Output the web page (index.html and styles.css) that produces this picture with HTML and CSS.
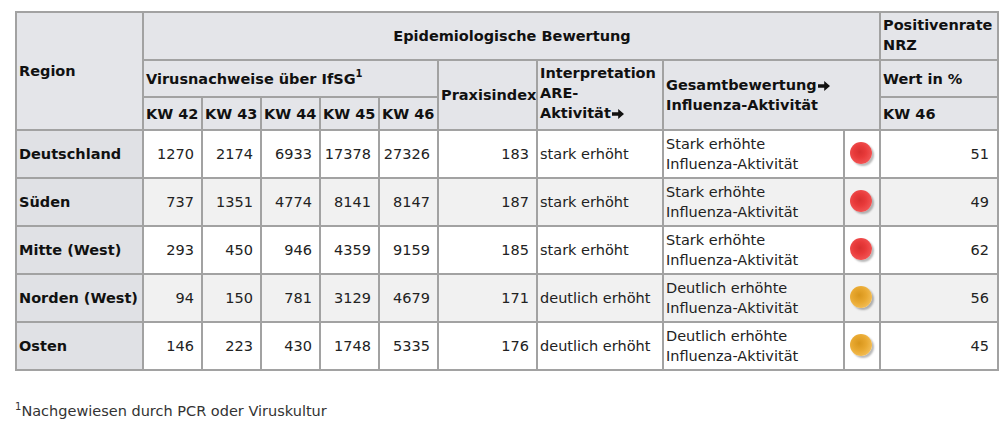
FILE: index.html
```html
<!DOCTYPE html>
<html lang="de">
<head>
<meta charset="utf-8">
<title>Influenza</title>
<link rel="stylesheet" href="styles.css">
</head>
<body>
<div class="page">
<table class="grid">
  <colgroup>
    <col class="c-region">
    <col class="c-kw"><col class="c-kw"><col class="c-kw"><col class="c-kw"><col class="c-kw">
    <col class="c-praxis">
    <col class="c-interp">
    <col class="c-gesamt">
    <col class="c-dot">
    <col class="c-pos">
  </colgroup>
  <thead>
    <tr class="h1">
      <th rowspan="3" class="left">Region</th>
      <th colspan="9" class="center">Epidemiologische Bewertung</th>
      <th class="left top">Positivenrate NRZ</th>
    </tr>
    <tr class="h2">
      <th colspan="5" class="left">Virusnachweise über IfSG<sup>1</sup></th>
      <th rowspan="2" class="left">Praxisindex</th>
      <th rowspan="2" class="left top">Interpretation ARE-<span class="nobr">Aktivität<svg class="arrow" viewBox="0 0 12 10" width="12" height="10"><path d="M0 3.3h6.2V0L12 5l-5.8 5V6.7H0z"/></svg></span></th>
      <th rowspan="2" colspan="2" class="left">Gesamtbewertung<svg class="arrow" viewBox="0 0 12 10" width="12" height="10"><path d="M0 3.3h6.2V0L12 5l-5.8 5V6.7H0z"/></svg><br>Influenza-Aktivität</th>
      <th class="left">Wert in %</th>
    </tr>
    <tr class="h3">
      <th class="left">KW 42</th>
      <th class="left">KW 43</th>
      <th class="left">KW 44</th>
      <th class="left">KW 45</th>
      <th class="left">KW 46</th>
      <th class="left">KW 46</th>
    </tr>
  </thead>
  <tbody>
    <tr class="odd">
      <th class="region">Deutschland</th>
      <td class="num">1270</td><td class="num">2174</td><td class="num">6933</td><td class="num">17378</td><td class="num">27326</td>
      <td class="num">183</td>
      <td class="txt">stark erhöht</td>
      <td class="txt two">Stark erhöhte<br>Influenza-Aktivität</td>
      <td class="dotcell"><span class="dot red"></span></td>
      <td class="num pos">51</td>
    </tr>
    <tr class="even">
      <th class="region">Süden</th>
      <td class="num">737</td><td class="num">1351</td><td class="num">4774</td><td class="num">8141</td><td class="num">8147</td>
      <td class="num">187</td>
      <td class="txt">stark erhöht</td>
      <td class="txt two">Stark erhöhte<br>Influenza-Aktivität</td>
      <td class="dotcell"><span class="dot red"></span></td>
      <td class="num pos">49</td>
    </tr>
    <tr class="odd">
      <th class="region">Mitte (West)</th>
      <td class="num">293</td><td class="num">450</td><td class="num">946</td><td class="num">4359</td><td class="num">9159</td>
      <td class="num">185</td>
      <td class="txt">stark erhöht</td>
      <td class="txt two">Stark erhöhte<br>Influenza-Aktivität</td>
      <td class="dotcell"><span class="dot red"></span></td>
      <td class="num pos">62</td>
    </tr>
    <tr class="even">
      <th class="region">Norden (West)</th>
      <td class="num">94</td><td class="num">150</td><td class="num">781</td><td class="num">3129</td><td class="num">4679</td>
      <td class="num">171</td>
      <td class="txt">deutlich erhöht</td>
      <td class="txt two">Deutlich erhöhte<br>Influenza-Aktivität</td>
      <td class="dotcell"><span class="dot orange"></span></td>
      <td class="num pos">56</td>
    </tr>
    <tr class="odd">
      <th class="region">Osten</th>
      <td class="num">146</td><td class="num">223</td><td class="num">430</td><td class="num">1748</td><td class="num">5335</td>
      <td class="num">176</td>
      <td class="txt">deutlich erhöht</td>
      <td class="txt two">Deutlich erhöhte<br>Influenza-Aktivität</td>
      <td class="dotcell"><span class="dot orange"></span></td>
      <td class="num pos">45</td>
    </tr>
  </tbody>
</table>
<p class="note"><sup>1</sup>Nachgewiesen durch PCR oder Viruskultur</p>
</div>
</body>
</html>
```

FILE: styles.css
```css
html, body {
  margin: 0;
  padding: 0;
  background: #ffffff;
}
.page {
  padding: 11px 0 0 15px;
  font-family: "DejaVu Sans", Verdana, sans-serif;
  font-size: 14.5px;
  color: #222;
}
.grid {
  border-collapse: collapse;
  table-layout: fixed;
  width: 982px;
  border: 2px solid #8a8a8a;
}
.c-region { width: 127px; }
.c-kw { width: 59px; }
.c-praxis { width: 99px; }
.c-interp { width: 126px; }
.c-gesamt { width: 181px; }
.c-dot { width: 36px; }
.c-pos { width: 118px; }

.grid th, .grid td {
  border: 2px solid #a2a2a2;
  padding: 0 1px 0 2px;
  line-height: 20px;
  vertical-align: middle;
  overflow: hidden;
}
.grid thead th {
  background: #e4e5e9;
  font-weight: bold;
  color: #111;
  white-space: normal;
}
.grid th.left { text-align: left; }
.grid th.center { text-align: center; }
.grid th.top { vertical-align: top; padding-top: 2px; }
.nobr { white-space: nowrap; }
.h1 { height: 48px; }
.h2 { height: 37px; }
.h3 { height: 33px; }
.grid sup {
  font-size: 10px;
  line-height: 0;
  vertical-align: 7px;
}
.arrow {
  display: inline-block;
  vertical-align: -1px;
  margin-left: 1px;
  fill: #111;
}
.grid tbody tr { height: 48px; }
.grid tbody tr.even td { background: #f1f1f1; }
.grid tbody tr.odd td { background: #ffffff; }
.grid th.region {
  background: #e0e1e5;
  text-align: left;
  font-weight: bold;
  color: #111;
  white-space: nowrap;
}
.grid td.num {
  text-align: right;
  padding-right: 7px;
}
.grid td.txt {
  text-align: left;
  white-space: nowrap;
}
.grid td.pos { padding-right: 8px; }
.grid td.dotcell {
  text-align: center;
  padding: 0;
}
.dot {
  display: inline-block;
  width: 22px;
  height: 22px;
  border-radius: 50%;
  vertical-align: middle;
  margin: -4px 3px 0 0;
  box-shadow: 2px 2px 2px rgba(0, 0, 0, 0.28);
}
.dot.red {
  background: radial-gradient(circle at 45% 45%, #d83030 0%, #e83a3a 35%, #f25656 75%, #e24040 100%);
}
.dot.orange {
  background: radial-gradient(circle at 42% 42%, #d8961c 0%, #e8a830 40%, #f4c05a 80%, #e0a840 100%);
}
.note {
  margin: 32px 0 0 0;
  color: #333;
  font-size: 14.5px;
}
.note sup {
  font-size: 10px;
  vertical-align: 6px;
  line-height: 0;
}
```
